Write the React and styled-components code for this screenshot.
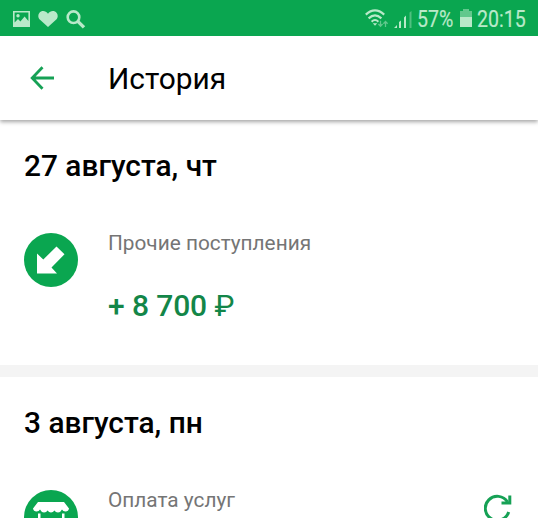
import styled, { createGlobalStyle } from "styled-components";

const GlobalStyle = createGlobalStyle`
  * {
    box-sizing: border-box;
  }
  body {
    margin: 0;
    overflow: hidden;
    background: #fff;
    font-family: Roboto, "Liberation Sans", sans-serif;
  }
  svg {
    display: block;
    flex: none;
  }
`;
const Screen = styled.div`
  height: 518px;
  overflow: hidden;
  background-color: #fff;
`;
const StatusBar = styled.div`
  display: flex;
  align-items: center;
  justify-content: space-between;
  height: 36px;
  padding: 2px 11px 0 13px;
  color: #b9e9c9;
  background-color: #0aa650;
`;
const StatusGroup = styled.div`
  display: flex;
  align-items: center;
  gap: ${(props) => props.$gap};
`;
const StatusText = styled.span`
  display: flex;
  width: ${(props) => props.$width};
  padding-top: 2px;
  font-size: 23px;
  line-height: 28px;
  white-space: nowrap;
  -webkit-text-stroke: 0.2px currentColor;
  transform: scaleX(${(props) => props.$squeeze});
  transform-origin: left;
`;
const Header = styled.header`
  display: flex;
  align-items: center;
  gap: 53px;
  height: 84px;
  padding: 0 30px;
  background-color: #fff;
  box-shadow: 0 2px 4px rgba(0, 0, 0, 0.35);
  clip-path: inset(0 0 -8px 0);
`;
const Title = styled.h1`
  margin: 0;
  padding-top: 2px;
  font-size: 29.9px;
  font-weight: 400;
  line-height: 36px;
  color: #000;
`;
const Day = styled.section`
  height: 245px;
  padding: 28px 24px 0;
`;
const Separator = styled.div`
  height: 12px;
  background-color: #f4f4f4;
`;
const DayTitle = styled.h2`
  margin: 0;
  font-size: 29.85px;
  font-weight: 500;
  line-height: 36px;
  color: #000;
`;
const Operation = styled.div`
  display: flex;
  align-items: flex-start;
  gap: 30px;
  margin-top: 49px;
`;
const Details = styled.div`
  flex: 1;
`;
const Category = styled.div`
  margin-top: -2px;
  font-size: 20.8px;
  line-height: 24px;
  color: #757575;
`;
const Amount = styled.div`
  margin-top: 33px;
  font-size: 30px;
  font-weight: 500;
  line-height: 36px;
  letter-spacing: -0.1px;
  color: #138648;
`;
const Currency = styled.span`
  font-weight: 400;
`;
const Repeat = styled.div`
  width: 28px;
  margin: 4px 2px 0 0;
`;

function ImageIcon() {
  return (
    <svg width="17" height="16" viewBox="0 0 17 16" fill="currentColor">
      <path
        fillRule="evenodd"
        d="M0 0H17V16H0ZM1.6 1.6V11.5L5 8L7.4 10.4L11.6 5.4L15.4 10V1.6Z"
      />
      <circle cx="5" cy="4.8" r="1.7" />
    </svg>
  );
}
function HeartIcon() {
  return (
    <svg width="20" height="16" viewBox="0 0 20 16" fill="currentColor">
      <path d="M10 16L2 8.8C-0.3 6.5 0 3.5 1.3 1.9C3.5-.7 7.7-.5 10 2.7C12.3-.5 16.5-.7 18.7 1.9C20 3.5 20.3 6.5 18 8.8Z" />
    </svg>
  );
}
function SearchIcon() {
  return (
    <svg width="20" height="19" viewBox="0 0 20 19" fill="none" stroke="currentColor">
      <circle cx="7.5" cy="7.2" r="5.8" strokeWidth="2.6" />
      <path d="M11.8 11.4L18 17.4" strokeWidth="3.4" />
    </svg>
  );
}
function WifiIcon() {
  return (
    <svg width="24" height="20" viewBox="0 0 24 20" fill="none" stroke="currentColor">
      <path d="M0.8 5.6Q10 -2.7 19.2 5.6" strokeWidth="2.2" />
      <path d="M3.6 9.4Q10 3.4 16.4 9.4" strokeWidth="2.2" />
      <path d="M6.6 12.7Q10 9.3 13.4 12.7" strokeWidth="2" />
      <path d="M7.8 14.2H12.2L10 16.7Z" fill="currentColor" stroke="none" />
      <path
        d="M15.5 11.8V17M13.4 15L15.5 17.3L17.6 15M20.5 18V12.8M18.4 14.8L20.5 12.5L22.6 14.8"
        strokeWidth="1.3"
        opacity="0.5"
      />
    </svg>
  );
}
function SignalIcon() {
  return (
    <svg width="18" height="17" viewBox="0 0 18 17" fill="currentColor">
      <path d="M0 17L3 14V17ZM5 11L7 9.5V17H5ZM10 6.5L12 4.5V17H10Z" />
      <path d="M15.5 1.5L17.5 0V17H15.5Z" opacity="0.4" />
    </svg>
  );
}
function BatteryIcon() {
  return (
    <svg width="12" height="20" viewBox="0 0 12 20" fill="currentColor">
      <path d="M3 0H9V2H12V8H0V2H3Z" opacity="0.5" />
      <path d="M0 8H12V18H0Z" />
    </svg>
  );
}
function BackIcon() {
  return (
    <svg width="25" height="24" viewBox="0 0 25 24" fill="none" stroke="#16a155" strokeWidth="2.8">
      <path d="M24 12H2.5M12.5 1.2L2.2 12L12.5 22.8" />
    </svg>
  );
}
function IncomeIcon() {
  return (
    <svg width="54" height="54" viewBox="0 0 54 54">
      <circle cx="27" cy="27" r="27" fill="#0aa650" />
      <path d="M13 20.5L19.3 26.5L32.5 13.5L40.5 21.3L27.5 34.5L33 40.5H13Z" fill="#fff" />
    </svg>
  );
}
function StoreIcon() {
  return (
    <svg width="54" height="54" viewBox="0 0 54 54">
      <circle cx="27" cy="27" r="27" fill="#0aa650" />
      <path
        d="M14 12H40L45 18.5Q44.5 21.5 41.5 21.5Q39 21.5 38 19.5Q36.5 22.5 34 22.5Q31.5 22.5 30.5 20.5Q29 22.5 27 22.5Q25 22.5 23.5 20.5Q22.5 22.5 20 22.5Q17.5 22.5 16 19.5Q15 21.5 12.5 21.5Q9.5 21.5 9 18.5Z"
        fill="#fff"
      />
      <path d="M14 23.5H16.5V42H14ZM38 23.5H40.5V42H38Z" fill="#fff" />
    </svg>
  );
}
function RepeatIcon() {
  return (
    <svg width="28" height="28" viewBox="0 0 28 28" fill="none" stroke="#16a155" strokeWidth="3">
      <path d="M24.7 18A12 12 0 1 1 23.5 8" />
      <path d="M25.8 1.5V9H17.5" />
    </svg>
  );
}

function App() {
  return (
    <Screen>
      <GlobalStyle />
      <StatusBar>
        <StatusGroup $gap="8px">
          <ImageIcon />
          <HeartIcon />
          <SearchIcon />
        </StatusGroup>
        <StatusGroup $gap="5px">
          <WifiIcon />
          <SignalIcon />
          <StatusText $width="38px" $squeeze={0.85}>
            57%
          </StatusText>
          <BatteryIcon />
          <StatusText $width="50px" $squeeze={0.85}>
            20:15
          </StatusText>
        </StatusGroup>
      </StatusBar>
      <Header>
        <BackIcon />
        <Title>История</Title>
      </Header>
      <Day>
        <DayTitle>27 августа, чт</DayTitle>
        <Operation>
          <IncomeIcon />
          <Details>
            <Category>Прочие поступления</Category>
            <Amount>
              + 8 700 <Currency>₽</Currency>
            </Amount>
          </Details>
        </Operation>
      </Day>
      <Separator />
      <Day>
        <DayTitle>3 августа, пн</DayTitle>
        <Operation>
          <StoreIcon />
          <Details>
            <Category>Оплата услуг</Category>
          </Details>
          <Repeat>
            <RepeatIcon />
          </Repeat>
        </Operation>
      </Day>
    </Screen>
  );
}

export default App;
